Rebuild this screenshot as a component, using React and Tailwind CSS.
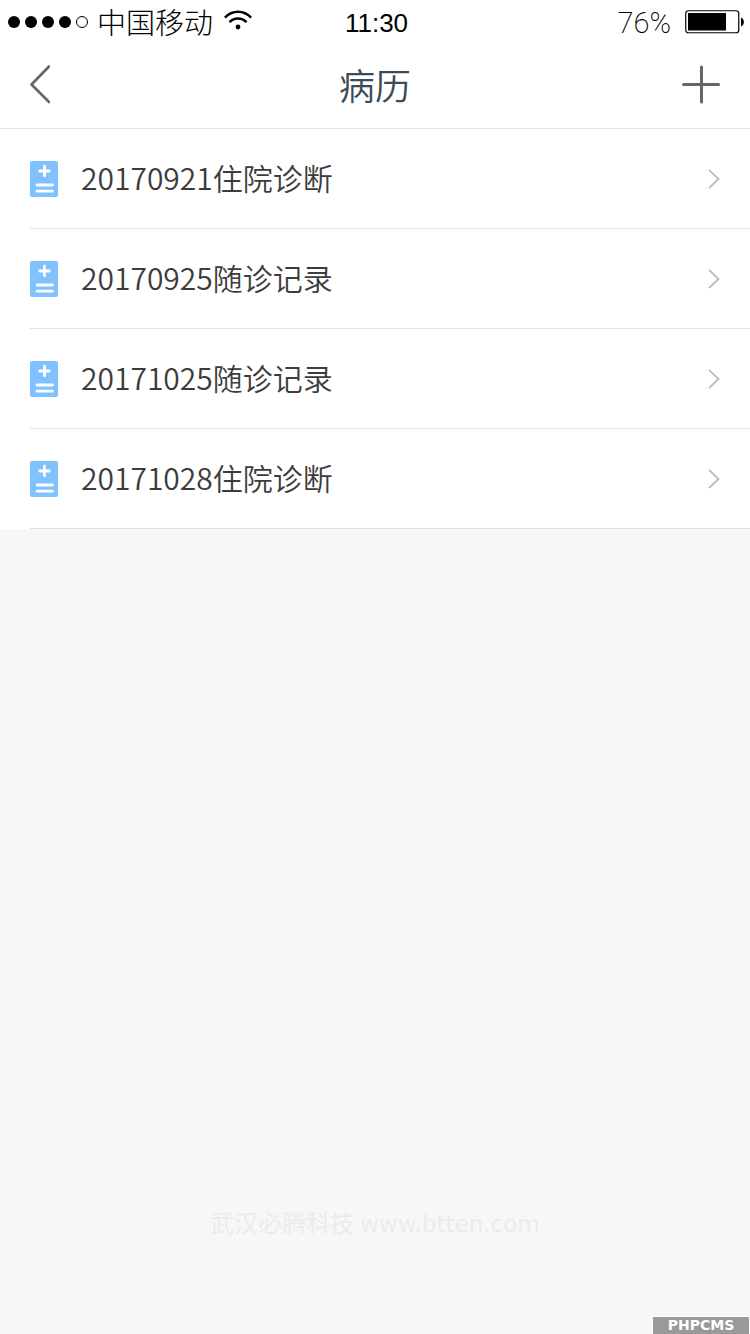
import React from 'react';

const records = [
  { id: 1, title: '20170921住院诊断' },
  { id: 2, title: '20170925随诊记录' },
  { id: 3, title: '20171025随诊记录' },
  { id: 4, title: '20171028住院诊断' },
];

const WifiIcon = () => (
  <svg className="w-7 h-5" viewBox="0 0 28 20" fill="none" stroke="#000" strokeWidth="2.4">
    <path d="M0.9 7.6C8.3 -0.3 19.7 -0.3 27.1 7.6" />
    <path d="M5.4 12.2C10.3 7.2 17.7 7.2 22.6 12.2" />
    <circle cx="14" cy="17" r="2.4" fill="#000" stroke="none" />
  </svg>
);

const BatteryIcon = () => (
  <svg className="w-[60px] h-6" viewBox="0 0 60 24">
    <rect x="0.75" y="0.75" width="53" height="22" rx="2.5" fill="#fff" stroke="#000" strokeWidth="1.2" />
    <rect x="3" y="3" width="38" height="17.5" fill="#000" />
    <path d="M56 7.5C59.8 9 59.8 15 56 16.5Z" fill="#000" />
  </svg>
);

const RecordIcon = () => (
  <svg className="w-7 h-9 shrink-0" viewBox="0 0 28 36">
    <rect width="28" height="36" rx="2" fill="#80c1ff" />
    <path
      d="M14.5 5.2V14.8M9.7 10H19.3M7 24H22.5M7 30.2H22.5"
      stroke="#fff"
      strokeWidth="2.8"
      strokeLinecap="round"
    />
  </svg>
);

const StatusBar = () => (
  <div className="grid grid-cols-3 items-center h-11 pl-2 pr-[5px] text-black">
    <div className="flex items-center">
      <svg className="w-[81px] h-3" viewBox="0 0 81 12">
        <circle cx="6" cy="6" r="6" />
        <circle cx="23" cy="6" r="6" />
        <circle cx="40" cy="6" r="6" />
        <circle cx="57" cy="6" r="6" />
        <circle cx="74" cy="6" r="5.5" fill="#fff" stroke="#000" />
      </svg>
      <span className="ml-2 pb-0.5 text-[29px] leading-10 font-light whitespace-nowrap">中国移动</span>
      <span className="ml-[11px] pb-1"><WifiIcon /></span>
    </div>
    <time className="pt-0.5 text-center font-['Liberation_Sans',sans-serif] text-[26px] leading-10">11:30</time>
    <div className="flex items-center justify-end gap-[14px]">
      <span className="pt-0.5 font-['Roboto',sans-serif] font-extralight text-[29px] leading-10">76%</span>
      <BatteryIcon />
    </div>
  </div>
);

const NavBar = () => (
  <header className="flex items-center justify-between h-[85px] px-[30px] pb-1 border-b border-[#e2e2e2]">
    <button type="button" aria-label="返回" className="w-10">
      <svg className="w-5 h-10" viewBox="0 0 20 40" fill="none" stroke="#666" strokeWidth="2.6" strokeLinecap="round" strokeLinejoin="round">
        <path d="M19 2.5L1.5 20.5L19 38" />
      </svg>
    </button>
    <h1 className="text-[36px] leading-[52px] font-[350] text-[#3b4b57]">病历</h1>
    <button type="button" aria-label="添加" className="w-10">
      <svg className="w-10 h-10" viewBox="0 0 40 40" fill="none" stroke="#666" strokeWidth="3" strokeLinecap="round">
        <path d="M21.5 3V38M3.5 20.5H38.5" />
      </svg>
    </button>
  </header>
);

const App = () => {
  return (
    <div className="min-h-screen flex flex-col bg-[#f7f7f7] font-['Noto_Sans_CJK_SC',sans-serif]">
      <div className="bg-white">
        <StatusBar />
        <NavBar />
      </div>

      {/* 病历列表 */}
      <ul className="bg-white pl-[30px]">
        {records.map((record) => (
          <li key={record.id} className="border-b border-[#e2e2e2]">
            <a href="#" className="flex items-center h-[99px] pr-[30px]">
              <RecordIcon />
              <span className="ml-[23px] pb-1 flex-1 text-[30px] leading-10 font-[350] text-[#3c3c3c]">{record.title}</span>
              <svg className="w-3 h-5" viewBox="0 0 12 20" fill="none" stroke="#bbb" strokeWidth="1.8">
                <path d="M1 0.8L10.5 10L1 19.2" />
              </svg>
            </a>
          </li>
        ))}
      </ul>

      {/* 底部水印 */}
      <footer className="mt-auto flex flex-col">
        <p className="mb-[75px] text-center text-[#ebebeb] leading-8">
          <span className="text-2xl leading-8">武汉必腾科技</span>
          <span className="ml-1.5 font-['DejaVu_Sans',sans-serif] text-[23px] leading-8">www.btten.com</span>
        </p>
        <div className="self-end w-[98px] h-[18px] border-t border-x border-white bg-[#999] text-white text-center font-['DejaVu_Sans',sans-serif] font-bold text-sm leading-4">
          PHPCMS
        </div>
      </footer>
    </div>
  );
};

export default App;
